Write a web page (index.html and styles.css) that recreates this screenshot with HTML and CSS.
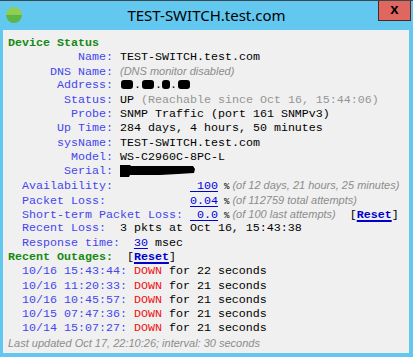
FILE: index.html
```html
<!DOCTYPE html>
<html>
<head lang="en">
    <meta charset="UTF-8">
    <title>TEST-SWITCH.test.com</title>
    <link rel="stylesheet" href="styles.css">
</head>
<body>
<div class="g-window">
    <div class="m-titlebar">
        <span class="app-icon"></span>
        <span class="title">TEST-SWITCH.test.com</span>
        <span class="close-btn">x</span>
    </div>
    <div class="g-content">
        <div class="heading">Device Status</div>
        <div class="info-row"><span class="label">Name:</span><span class="value">TEST-SWITCH.test.com</span></div>
        <div class="info-row"><span class="label">DNS Name:</span><span class="value note">(DNS monitor disabled)</span></div>
        <div class="info-row"><span class="label">Address:</span><span class="value"><span class="blot w2"></span>.<span class="blot w2"></span>.<span class="blot w1"></span>.<span class="blot w2"></span></span></div>
        <div class="info-row"><span class="label">Status:</span><span class="value">UP <span class="dim">(Reachable since Oct 16, 15:44:06)</span></span></div>
        <div class="info-row"><span class="label">Probe:</span><span class="value">SNMP Traffic (port 161 SNMPv3)</span></div>
        <div class="info-row"><span class="label">Up Time:</span><span class="value">284 days, 4 hours, 50 minutes</span></div>
        <div class="info-row"><span class="label">sysName:</span><span class="value">TEST-SWITCH.test.com</span></div>
        <div class="info-row"><span class="label">Model:</span><span class="value">WS-C2960C-8PC-L</span></div>
        <div class="info-row"><span class="label">Serial:</span><span class="value"><svg class="serial-blot" width="76" height="12" viewBox="0 0 76 12"><path d="M0 0 L10 0 L11 1 L32 1 L54 1 L73 1 L75 4 L74 8 L58 9 L40 10 L20 10 L10 10 L9 12 L0 12 Z" fill="#000"/></svg></span></div>

        <div class="m-stats">
            <div class="stat-row"><span class="stat-label">Availability:</span><span class="field">&nbsp;100</span><span class="pct">%</span><span class="note">(of 12 days, 21 hours, 25 minutes)</span></div>
            <div class="stat-row"><span class="stat-label">Packet Loss:</span><span class="field">0.04</span><span class="pct">%</span><span class="note">(of 112759 total attempts)</span></div>
            <div class="stat-row"><span class="stat-label">Short-term Packet Loss:</span><span class="field">&nbsp;0.0</span><span class="pct">%</span><span class="note">(of 100 last attempts)</span><span class="reset">[<a href="#">Reset</a>]</span></div>
            <div class="stat-row"><span class="label-inline">Recent Loss:</span>3 pkts at Oct 16, 15:43:38</div>
            <div class="stat-row"><span class="label-inline">Response time:</span><span class="field">30</span> msec</div>
        </div>

        <div class="heading">Recent Outages:<span class="reset">[<a href="#">Reset</a>]</span></div>
        <ul class="m-outages">
            <li><span class="when">10/16 15:43:44:</span> <span class="down">DOWN</span> for 22 seconds</li>
            <li><span class="when">10/16 11:20:33:</span> <span class="down">DOWN</span> for 21 seconds</li>
            <li><span class="when">10/16 10:45:57:</span> <span class="down">DOWN</span> for 21 seconds</li>
            <li><span class="when">10/15 07:47:36:</span> <span class="down">DOWN</span> for 21 seconds</li>
            <li><span class="when">10/14 15:07:27:</span> <span class="down">DOWN</span> for 21 seconds</li>
        </ul>
        <div class="footer note">Last updated Oct 17, 22:10:26; interval: 30 seconds</div>
    </div>
</div>
</body>
</html>
```

FILE: styles.css
```css
* {
    margin: 0;
    padding: 0;
}
ul {
    list-style: none;
}
body {
    background-color: #62c8ef;
}
.g-window {
    width: 413px;
    height: 357px;
    box-sizing: border-box;
    border-top: 1px solid #3a4850;
    background-color: #62c8ef;
}
.m-titlebar {
    height: 29px;
    display: grid;
    grid-template-columns: 1fr auto 1fr;
    align-items: start;
}
.app-icon {
    width: 16px;
    height: 16px;
    margin: 6px 0 0 6px;
    border-radius: 50%;
    background: linear-gradient(#8fcd55 50%, #5db548 50%);
}
.title {
    font-family: "Noto Sans", sans-serif;
    font-size: 15px;
    line-height: 29px;
    color: #000;
}
.close-btn {
    justify-self: end;
    width: 33px;
    height: 20px;
    margin-right: 2px;
    box-sizing: border-box;
    border: 1px solid #4d2624;
    border-top: 0;
    background-color: #e0675f;
    font-family: "Liberation Sans", sans-serif;
    font-weight: bold;
    font-size: 15px;
    line-height: 16px;
    text-align: center;
    color: #000;
}
.g-content {
    margin: 0 4px 0 3px;
    height: 323px;
    box-sizing: border-box;
    padding: 5.5px 5px 0 5px;
    background-color: #f0f0f0;
    font-family: "Liberation Mono", "Courier New", monospace;
    font-size: 11.67px;
    line-height: 14.3px;
    color: #000;
    white-space: nowrap;
}
.heading,
.info-row,
.stat-row,
.m-outages li,
.footer {
    height: 14.3px;
}
.heading {
    color: #148a14;
    font-weight: bold;
}
.heading .reset {
    margin-left: 14px;
    font-weight: normal;
    color: #000;
}
.info-row .label {
    display: inline-block;
    width: 105px;
    text-align: right;
    color: #4545ee;
}
.info-row .value {
    margin-left: 7px;
}
.note {
    font-family: "Liberation Sans", sans-serif;
    font-style: italic;
    font-size: 11px;
    color: #8c8c8c;
}
.dim {
    color: #959595;
}
.blot {
    display: inline-block;
    height: 9px;
    background-color: #000;
    border-radius: 3px;
    vertical-align: -1px;
}
.blot.w1 {
    width: 8px;
}
.blot.w2 {
    width: 12px;
    margin: 0 1px;
}
.serial-blot {
    vertical-align: -3px;
}
.m-stats {
    padding-left: 14px;
}
.stat-label {
    display: inline-block;
    width: 168px;
    color: #4545ee;
}
.label-inline {
    margin-right: 14px;
    color: #4545ee;
}
.field {
    color: #0000dd;
    text-decoration: underline;
    text-underline-offset: 2px;
}
.pct {
    margin: 0 3px 0 6px;
    font-size: 9px;
}
.reset {
    margin-left: 14px;
}
.reset a {
    color: #0000cc;
    font-weight: bold;
    text-decoration: underline;
    text-decoration-thickness: 2px;
    text-underline-offset: 2px;
}
.m-outages {
    padding-left: 14px;
}
.m-outages .when {
    color: #4545ee;
}
.m-outages .down {
    color: #ee1111;
}
.footer {
    display: block;
}
```
